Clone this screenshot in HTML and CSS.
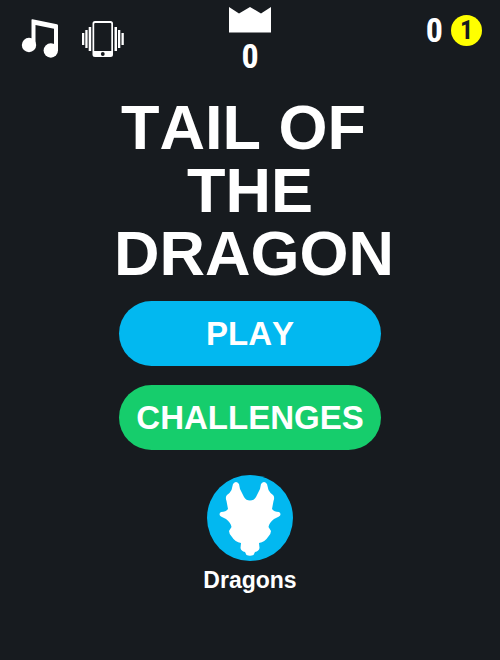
FILE: index.html
```html
<!DOCTYPE html>
<html lang="en">
<head>
<meta charset="utf-8">
<meta name="viewport" content="width=device-width, initial-scale=1">
<title>Tail of the Dragon</title>
<link rel="stylesheet" href="styles.css">
</head>
<body>
<header class="topbar">
  <div class="toggles">
    <button class="icon-button" type="button" aria-label="Music">
      <svg width="38" height="40" viewBox="0 0 38 40" fill="#fff">
        <path d="M10.5 0.8Q10.5 0 11.5 .2L36 5.2Q37 5.4 37 6.5V32H33V9.8L14.5 6V27H10.5Z"/>
        <circle cx="8" cy="26" r="7.2"/>
        <circle cx="29.8" cy="31.5" r="7.2"/>
      </svg>
    </button>
    <button class="icon-button" type="button" aria-label="Vibration">
      <svg width="42" height="38" viewBox="0 0 42 38" fill="#fff">
        <path fill-rule="evenodd" d="M13 1H28.5Q31 1 31 3.5V34.5Q31 37 28.5 37H13Q10.5 37 10.5 34.5V3.5Q10.5 1 13 1ZM12.2 4V31H29.3V4Q29.3 3 28.3 3H13.2Q12.2 3 12.2 4Z"/>
        <circle cx="20.8" cy="34" r="1.9" fill="#171b1f"/>
        <path d="M0 13h2.3v12H0zM3.3 10h2.3v18h-2.3zM6.7 7h2.5v24h-2.5zM32.5 7h2.5v24h-2.5zM36 10h2.3v18h-2.3zM39.5 13h2.3v12h-2.3z"/>
      </svg>
    </button>
  </div>
  <div class="best">
    <svg width="42" height="26" viewBox="0 0 42 26" fill="#fff" aria-hidden="true"><path d="M0 0L10 6.5L21 0L32 6.5L42 0V25.5H0Z"/></svg>
    <span class="number">0</span>
  </div>
  <div class="coins"><span class="number">0</span><span class="coin">1</span></div>
</header>
<main class="menu">
  <h1 class="title"><span class="lead">TAIL OF</span><span>THE</span><span>DRAGON</span></h1>
  <button class="pill play" type="button">PLAY</button>
  <button class="pill challenges" type="button">CHALLENGES</button>
  <button class="dragons" type="button">
    <svg width="86" height="86" viewBox="0 0 86 86" aria-hidden="true">
      <circle cx="43" cy="43" r="43" fill="#02b8f0"/>
      <path fill="#fff" d="M26 9Q29 5 32 9L33 14L37 22Q39 25.5 43 25.5Q47 25.5 49 22L53 14L54 9Q57 5 60 9L61.5 15Q63 18 66 20Q68 22 66.5 26L65 34Q67 37 72 37Q75 39 72 41.5L67 44Q62 48 61.5 52L64 56Q64 59 61 62Q58 67 52 68L52.5 73Q52 76 48 77L46.5 80Q43 81.5 39.5 80L38 77Q34 76 33.5 73L34 68Q28 67 25 62Q22 59 22 56L24.5 52Q24 48 19 44L14 41.5Q11 39 14 37Q19 37 21 34L19.5 26Q18 22 20 20Q23 18 24.5 15Z"/>
    </svg>
    <span>Dragons</span>
  </button>
</main>
</body>
</html>
```
FILE: styles.css
```css
* {
  box-sizing: border-box;
}

body {
  margin: 0;
  min-height: 100vh;
  background: #171b1f;
  color: #fff;
  font-family: "Liberation Sans", Arial, sans-serif;
  font-weight: bold;
  font-kerning: none;
}

button {
  border: 0;
  padding: 0;
  background: none;
  color: inherit;
  font: inherit;
  font-kerning: none;
  cursor: pointer;
}

svg {
  display: block;
}

.topbar {
  display: grid;
  grid-template-columns: 1fr auto 1fr;
  align-items: start;
  padding: 7px 18px 0;
}

.toggles {
  display: flex;
  align-items: center;
  gap: 23px;
  padding: 12px 0 0 3px;
}

.best {
  display: flex;
  flex-direction: column;
  align-items: center;
  gap: 6px;
}

.number {
  font-family: "Roboto Condensed", Roboto, sans-serif;
  font-size: 34px;
  line-height: 34px;
}

.coins {
  display: flex;
  justify-content: flex-end;
  align-items: center;
  gap: 8px;
  padding-top: 6px;
}

.coin {
  width: 31px;
  height: 31px;
  border-radius: 50%;
  background: #ff0;
  color: #171b1f;
  font-family: "Roboto Condensed", Roboto, sans-serif;
  font-size: 26px;
  line-height: 31px;
  text-align: center;
}

.menu {
  display: flex;
  flex-direction: column;
  align-items: center;
  padding-top: 23px;
}

.title {
  width: 272px;
  margin: 0 0 16px;
  font-size: 63px;
  line-height: 63px;
  text-align: center;
}

.title span {
  display: block;
  white-space: nowrap;
}

.title .lead {
  padding-right: 13px;
}

.pill {
  width: 262px;
  height: 65px;
  border-radius: 33px;
  font-size: 33px;
  font-weight: bold;
}

.play {
  margin-bottom: 19px;
  background: #02b8f0;
}

.challenges {
  margin-bottom: 25px;
  background: #16cd6c;
}

.dragons {
  display: flex;
  flex-direction: column;
  align-items: center;
  gap: 6px;
  font-size: 23px;
  line-height: 26px;
}
```
